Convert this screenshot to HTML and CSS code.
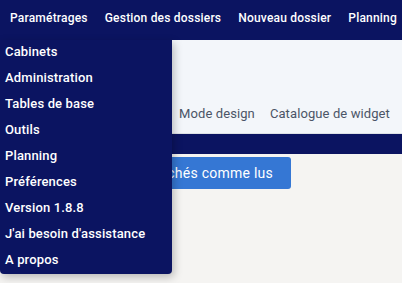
FILE: index.html
```html
<!DOCTYPE html>
<html>

<head>
    <title>Dossiers</title>
    <link rel="stylesheet" href="styles.css">
</head>

<body>
    <div id="topbar">
        <span class="topitem">Paramétrages</span>
        <span class="topitem">Gestion des dossiers</span>
        <span class="topitem">Nouveau dossier</span>
        <span class="topitem">Planning</span>
    </div>

    <div id="page">
        <div id="tabs">
            <span class="tab">Mode design</span>
            <span class="tab">Catalogue de widget</span>
        </div>
        <div id="band"></div>
        <div id="actions">
            <button class="action">Marquer les cochés comme lus</button>
        </div>
    </div>

    <div id="menu">
        <div class="menuitem">Cabinets</div>
        <div class="menuitem">Administration</div>
        <div class="menuitem">Tables de base</div>
        <div class="menuitem">Outils</div>
        <div class="menuitem">Planning</div>
        <div class="menuitem">Préférences</div>
        <div class="menuitem">Version 1.8.8</div>
        <div class="menuitem">J'ai besoin d'assistance</div>
        <div class="menuitem">A propos</div>
    </div>
</body>

</html>
```

FILE: styles.css
```css
body {
    margin: 0;
    font-family: Roboto, "Liberation Sans", sans-serif;
    background-color: #f5f4f2;
}

#topbar {
    background-color: #0b1461;
    height: 40px;
    display: flex;
    align-items: flex-start;
    padding-left: 10px;
    gap: 17px;
    overflow: hidden;
}

.topitem {
    color: #ffffff;
    font-size: 12px;
    font-weight: 500;
    line-height: 16px;
    padding-top: 10px;
    white-space: nowrap;
    flex-shrink: 0;
    letter-spacing: 0.2px;
}

#tabs {
    background-color: #f3f6fa;
    border-bottom: 1px solid #dde1e6;
    display: flex;
    align-items: flex-end;
    padding-left: 179px;
    gap: 15px;
    box-sizing: border-box;
    height: 94px;
}

.tab {
    color: #4b5567;
    font-size: 13px;
    line-height: 16px;
    padding-bottom: 11px;
    white-space: nowrap;
    letter-spacing: 0.1px;
}

#band {
    background-color: #0b1461;
    height: 20px;
}

#actions {
    width: 291px;
    display: flex;
    justify-content: flex-end;
    padding-top: 3px;
}

.action {
    background-color: #3577d4;
    color: #ffffff;
    border: none;
    border-radius: 3px;
    height: 32px;
    padding: 0 18px;
    font-family: Roboto, "Liberation Sans", sans-serif;
    font-size: 14px;
    white-space: nowrap;
    letter-spacing: 0.25px;
}

#menu {
    position: absolute;
    top: 40px;
    left: 0;
    width: 172px;
    background-color: #0b1461;
    border-radius: 0 0 4px 4px;
    box-shadow: 2px 3px 8px rgba(0, 0, 0, 0.25);
}

.menuitem {
    color: #ffffff;
    font-size: 13px;
    font-weight: 500;
    line-height: 18px;
    padding: 3px 5px 5px 5px;
    letter-spacing: 0.15px;
}
```
